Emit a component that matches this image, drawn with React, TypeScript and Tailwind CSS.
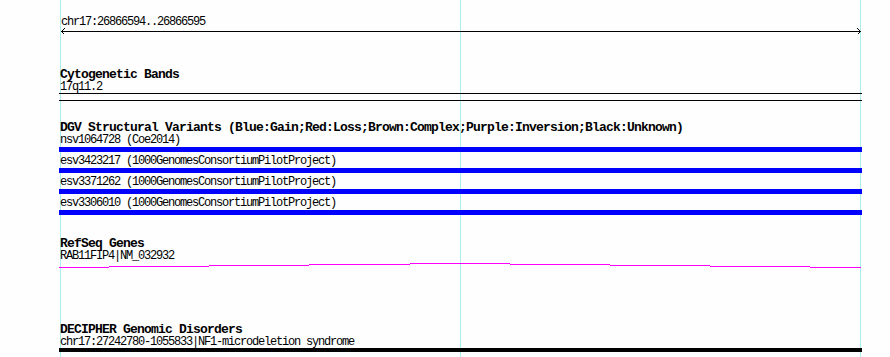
const title = "font-['Liberation_Mono',monospace] font-bold text-[13px] leading-[13px] tracking-[-0.8px] text-black pl-[1px] whitespace-pre";
const label = "font-['Liberation_Mono',monospace] text-[12px] leading-[12px] tracking-[-1.2px] text-black pl-[1px] whitespace-pre";

const dgv = [
  "nsv1064728 (Coe2014)",
  "esv3423217 (1000GenomesConsortiumPilotProject)",
  "esv3371262 (1000GenomesConsortiumPilotProject)",
  "esv3306010 (1000GenomesConsortiumPilotProject)",
];

// stepped gene model, x relative to track start (59px)
const gene: [number, number, number][] = [
  [0, 50, 5.5],
  [50, 150, 4.5],
  [150, 250, 3.5],
  [250, 351, 2.5],
  [351, 451, 1.5],
  [451, 551, 2.5],
  [551, 651, 3.5],
  [651, 751, 4.5],
  [751, 802, 5.5],
];

function Ruler() {
  return (
    <svg width={803} height={8} className="block" shapeRendering="crispEdges">
      <line x1={2} y1={3.5} x2={802} y2={3.5} stroke="#000" />
      <path d="M5.5 0.5 L2.5 3.5 L5.5 6.5" stroke="#000" fill="none" />
      <path d="M798.5 0.5 L801.5 3.5 L798.5 6.5" stroke="#000" fill="none" />
    </svg>
  );
}

export default function App() {
  return (
    <div className="relative w-[890px] h-[357px] overflow-hidden bg-[#fdfefd]">
      {/* guide lines */}
      <div className="absolute top-0 bottom-0 left-[60px] w-px bg-[#aaeef0]" />
      <div className="absolute top-0 bottom-0 left-[460px] w-px bg-[#aaeef0]" />
      <div className="absolute top-0 bottom-0 left-[860px] w-px bg-[#aaeef0]" />

      <div className="relative w-[862px] pl-[59px] pt-[16px] flex flex-col">
        <div className={label + " pl-[2px]"}>chr17:26866594..26866595</div>
        <Ruler />

        {/* Cytogenetic bands */}
        <div className={title + " mt-[32px]"}>Cytogenetic Bands</div>
        <div className={label}>17q11.2</div>
        <div className="h-[8px] border-y border-black" />

        {/* DGV */}
        <div className={title + " mt-[20px]"}>
          DGV Structural Variants (Blue:Gain;Red:Loss;Brown:Complex;Purple:Inversion;Black:Unknown)
        </div>
        <div className="flex flex-col gap-[3px]">
          {dgv.map((d) => (
            <div key={d}>
              <div className={label + " leading-[13px]"}>{d}</div>
              <div className="h-[5px] bg-[#0000ff]" />
            </div>
          ))}
        </div>

        {/* RefSeq */}
        <div className={title + " mt-[22px]"}>RefSeq Genes</div>
        <div className={label}>RAB11FIP4|NM_032932</div>
        <svg width={803} height={6} className="block" shapeRendering="crispEdges">
          {gene.map(([a, b, y]) => (
            <line key={a} x1={a} x2={b} y1={y} y2={y} stroke="#ff00ff" />
          ))}
        </svg>

        {/* DECIPHER */}
        <div className={title + " mt-[55px]"}>DECIPHER Genomic Disorders</div>
        <div className={label}>chr17:27242780-1055833|NF1-microdeletion syndrome</div>
        <div className="h-[4px] bg-black" />
      </div>
    </div>
  );
}
